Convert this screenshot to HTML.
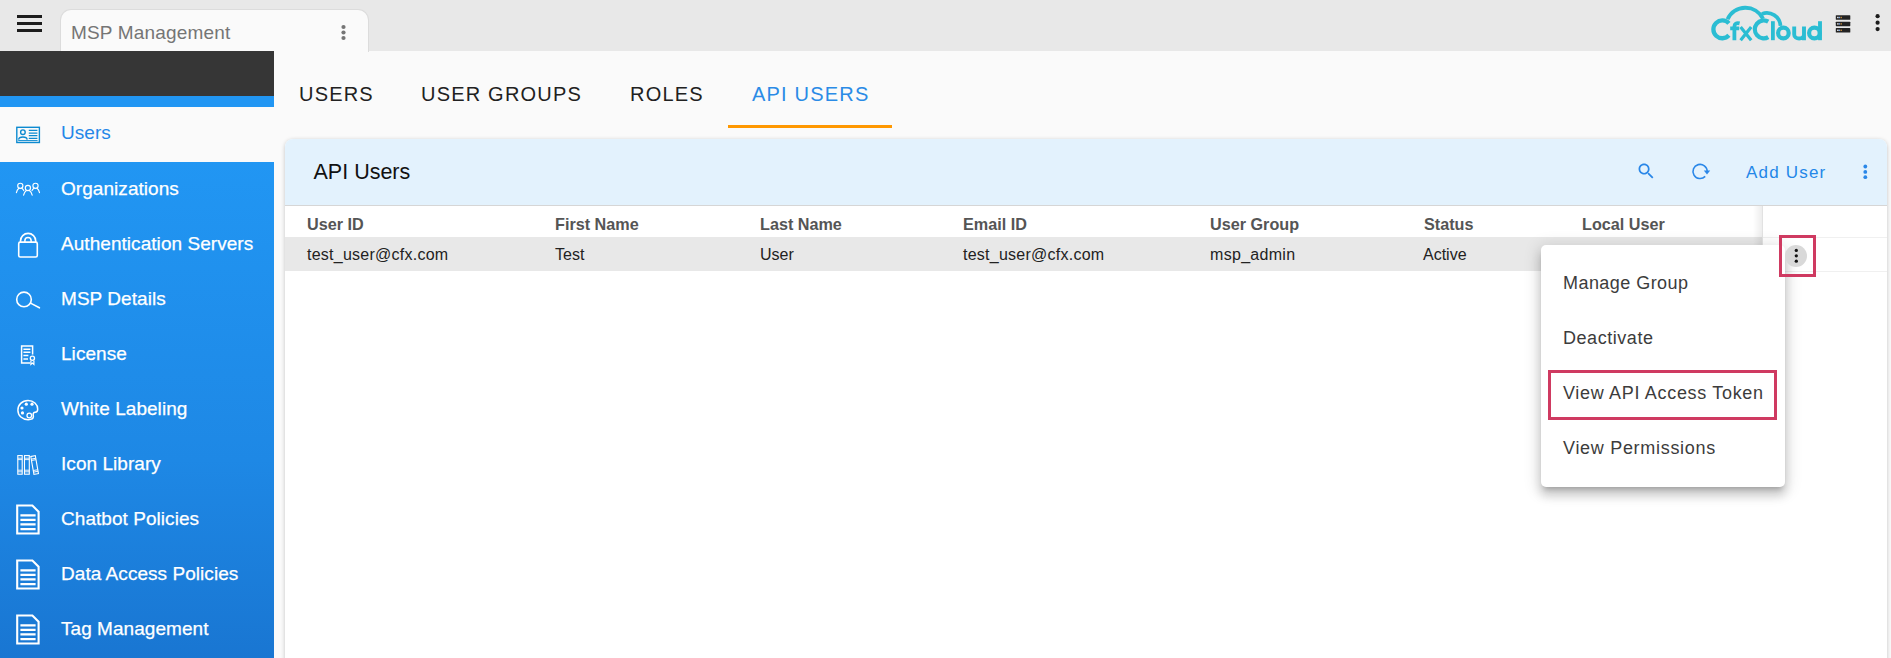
<!DOCTYPE html>
<html>
<head>
<meta charset="utf-8">
<title>MSP Management</title>
<style>
*{box-sizing:border-box;margin:0;padding:0}
html,body{width:1891px;height:658px;overflow:hidden;background:#fafafa;font-family:"Liberation Sans",sans-serif;}
.abs{position:absolute}
#topbar{left:0;top:0;width:1891px;height:51px;background:#e8e8e8}
#tab{left:60px;top:9px;width:309px;height:43px;background:#fafafa;border:1px solid #dcdcdc;border-bottom:none;border-radius:11px 11px 0 0}
#tabtxt{left:71px;top:22px;font-size:19px;line-height:22px;color:#757575;white-space:nowrap;letter-spacing:0.18px}
.ham{left:17px;width:25px;height:3px;background:#1c1c1c}
#side-dark{left:0;top:51px;width:274px;height:45px;background:#363636}
#side-blue1{left:0;top:96px;width:274px;height:11px;background:#2196f3}
#side-users{left:0;top:107px;width:274px;height:55px;background:#fafafa}
#side-blue2{left:0;top:162px;width:274px;height:496px;background:linear-gradient(180deg,#2196f3 0%,#1e88e5 60%,#1976d2 100%)}
.sitem{left:61px;font-size:19px;line-height:22px;color:#fff;white-space:nowrap;-webkit-text-stroke:0.25px #fff;letter-spacing:0.05px}
.tabs{top:82px;font-size:20px;line-height:24px;letter-spacing:1.2px;color:#212121;white-space:nowrap}
#underline{left:728px;top:125px;width:164px;height:3px;background:#ff9800}
#panel{left:285px;top:139px;width:1602px;height:540px;background:#fff;border-radius:8px 8px 0 0;box-shadow:0 1px 4px rgba(0,0,0,0.22)}
#phead{left:285px;top:139px;width:1602px;height:67px;background:#e3f2fd;border-radius:8px 8px 0 0;border-bottom:1px solid #d6d6d6}
#ptitle{left:313.5px;top:159px;font-size:21.5px;line-height:26px;color:#111;white-space:nowrap}
.th{top:215px;font-size:16.2px;line-height:18px;font-weight:bold;color:#555;white-space:nowrap}
.td{top:246px;font-size:16px;line-height:18px;color:#222;white-space:nowrap}
#row{left:285px;top:237px;width:1477px;height:34px;background:#e8e8e8}
#pin{left:1762px;top:206px;width:125px;height:66px;background:#fff;border-left:1px solid #e2e2e2}
#pinrow{left:1763px;top:237px;width:124px;height:35px;border-top:1px solid #f0f0f0;border-bottom:1px solid #f0f0f0;background:#fff}
#menu{left:1541px;top:245px;width:244px;height:242px;background:#fff;border-radius:5px;box-shadow:0 5px 5px -3px rgba(0,0,0,.2),0 8px 10px 1px rgba(0,0,0,.14),0 3px 16px 3px rgba(0,0,0,.12)}
.mi{left:1563px;font-size:18px;line-height:22px;color:#3c3c3c;white-space:nowrap;letter-spacing:0.2px}
.red{border:3px solid #cf3a61}
#adduser{left:1746px;top:163px;font-size:17px;line-height:20px;color:#2487e8;letter-spacing:1.2px;white-space:nowrap}
</style>
</head>
<body>
<div id="topbar" class="abs"></div>
<div id="tab" class="abs"></div>
<div id="tabtxt" class="abs">MSP Management</div>
<div class="abs ham" style="top:15px"></div>
<div class="abs ham" style="top:22px"></div>
<div class="abs ham" style="top:29px"></div>
<svg class="abs" style="left:339px;top:23px" width="8" height="20" viewBox="0 0 8 20"><circle cx="4.5" cy="4" r="2.1" fill="#757575"/><circle cx="4.5" cy="9.5" r="2.1" fill="#757575"/><circle cx="4.5" cy="15" r="2.1" fill="#757575"/></svg>

<div id="side-dark" class="abs"></div>
<div id="side-blue1" class="abs"></div>
<div id="side-users" class="abs"></div>
<div id="side-blue2" class="abs"></div>
<div class="abs sitem" style="top:122px;color:#2487e8;-webkit-text-stroke:0">Users</div>
<div class="abs sitem" style="top:178px">Organizations</div>
<div class="abs sitem" style="top:233px">Authentication Servers</div>
<div class="abs sitem" style="top:288px">MSP Details</div>
<div class="abs sitem" style="top:343px">License</div>
<div class="abs sitem" style="top:398px">White Labeling</div>
<div class="abs sitem" style="top:453px">Icon Library</div>
<div class="abs sitem" style="top:508px">Chatbot Policies</div>
<div class="abs sitem" style="top:563px">Data Access Policies</div>
<div class="abs sitem" style="top:618px">Tag Management</div>


<!-- sidebar icons -->
<svg class="abs" style="left:14px;top:124px" width="30" height="22" viewBox="14 124 30 22" fill="none" stroke="#0d8ad0" stroke-width="1.4">
<rect x="16.8" y="127.3" width="22.6" height="15.2"/>
<circle cx="22.9" cy="132.2" r="2.3"/>
<path d="M18.6 139.6 C19.2 136.2 26.6 136.2 27.2 139.6"/>
<path d="M28.8 130.3H37.4M28.8 133H37.4M28.8 135.7H37.4M28.8 138.3H37.4" stroke-width="1.25"/>
<path d="M18.2 140.6H37.6" stroke-width="1"/>
</svg>

<svg class="abs" style="left:14px;top:180px" width="30" height="18" viewBox="14 180 30 18" fill="none" stroke="#fff" stroke-width="1.15" stroke-linecap="round">
<circle cx="20.3" cy="185.8" r="2.6"/><path d="M16.4 192.6C17 189.6 18.4 188.6 18.9 188.2M21.8 188.2C22.6 188.8 23.4 189.6 23.8 190.6"/>
<circle cx="35.5" cy="185.8" r="2.6"/><path d="M39.5 192.6C38.9 189.6 37.5 188.6 37 188.2M34 188.2C33.2 188.8 32.4 189.6 32 190.6"/>
<circle cx="27.9" cy="188" r="2.6"/><path d="M23.6 195.2C24.2 192.2 25.7 191 26.4 190.5M29.4 190.5C30.1 191 31.6 192.2 32.2 195.2"/>
</svg>

<svg class="abs" style="left:14px;top:230px" width="30" height="30" viewBox="14 230 30 30" fill="none" stroke="#fff" stroke-width="1.6">
<rect x="18.7" y="242.1" width="18.6" height="14.9" rx="1.6"/>
<path d="M20.5 242V241A7.6 7.6 0 0 1 35.7 241V242"/>
<path d="M24.9 242V240.6A3.1 3.1 0 0 1 31.1 240.6V242" stroke-width="1.5"/>
</svg>

<svg class="abs" style="left:14px;top:288px" width="30" height="24" viewBox="14 288 30 24" fill="none" stroke="#fff" stroke-width="1.6" stroke-linecap="round">
<circle cx="24" cy="299.4" r="7.3"/>
<path d="M31 303.4L39.4 307.8"/>
</svg>

<svg class="abs" style="left:14px;top:342px" width="30" height="26" viewBox="14 342 30 26" fill="none" stroke="#fff" stroke-width="1.3">
<path d="M30 363H21.6V345.9H32.6V354.6" stroke-width="1.5"/>
<path d="M23.4 349.2H30.4M23.4 352.3H30.4M23.4 355.6H28.4M23.4 359H28" stroke-width="1.5"/>
<circle cx="32.4" cy="358.3" r="2.1"/>
<path d="M30.9 360.4V364.4L32.4 363L33.9 364.4V360.4" stroke-width="1.2"/>
</svg>

<svg class="abs" style="left:14px;top:396px" width="30" height="28" viewBox="14 396 30 28" fill="none" stroke="#fff" stroke-width="1.5">
<path d="M28 400.6C22 400.6 17.9 404.8 17.9 410.2C17.9 415.8 22.3 419.7 28.2 419.7C30.8 419.7 33.4 418.6 33.4 416.6C33.4 414.8 32.6 414.2 33.6 412.9C34.8 411.8 37.7 413.2 37.7 409.2C37.7 404.2 33.6 400.6 28 400.6Z"/>
<circle cx="29.3" cy="415.5" r="2.3" stroke-width="1.3"/>
<g fill="#fff" stroke="none"><circle cx="22" cy="408" r="1.6"/><circle cx="26.3" cy="404.2" r="1.6"/><circle cx="32" cy="404.2" r="1.6"/><circle cx="22.5" cy="412.9" r="1.6"/></g>
</svg>

<svg class="abs" style="left:14px;top:452px" width="30" height="26" viewBox="14 452 30 26" fill="none" stroke="#fff" stroke-width="1.1">
<rect x="17.8" y="455.6" width="4.4" height="18.6"/><path d="M17.8 458.2H22.2M17.8 459.6H22.2M17.8 470.2H22.2M17.8 471.8H22.2" stroke-width="0.9"/>
<rect x="24.5" y="455.6" width="4.8" height="18.6"/><path d="M24.5 458.2H29.3M24.5 459.6H29.3M24.5 470.2H29.3M24.5 471.8H29.3" stroke-width="0.9"/>
<g transform="rotate(-10 34.6 465)"><rect x="32.3" y="456" width="4.6" height="18.2"/><path d="M32.3 458.6H36.9M32.3 460H36.9M32.3 470.2H36.9M32.3 471.8H36.9" stroke-width="0.9"/></g>
</svg>
<svg class="abs" style="left:14px;top:502px" width="30" height="34" viewBox="14 0 30 34" fill="none" stroke="#fff" stroke-width="2">
<path d="M17.2 3.5H32.4L38.6 9.8V31.5H17.2Z" stroke-linejoin="miter" stroke-width="2.1"/>
<path d="M20.4 13.3H35.6M20.4 17.8H35.6M20.4 22.3H35.6M20.4 27.1H35.6" stroke-width="2.2"/>
</svg>
<svg class="abs" style="left:14px;top:557px" width="30" height="34" viewBox="14 0 30 34" fill="none" stroke="#fff" stroke-width="2">
<path d="M17.2 3.5H32.4L38.6 9.8V31.5H17.2Z" stroke-linejoin="miter" stroke-width="2.1"/>
<path d="M20.4 13.3H35.6M20.4 17.8H35.6M20.4 22.3H35.6M20.4 27.1H35.6" stroke-width="2.2"/>
</svg>
<svg class="abs" style="left:14px;top:612px" width="30" height="34" viewBox="14 0 30 34" fill="none" stroke="#fff" stroke-width="2">
<path d="M17.2 3.5H32.4L38.6 9.8V31.5H17.2Z" stroke-linejoin="miter" stroke-width="2.1"/>
<path d="M20.4 13.3H35.6M20.4 17.8H35.6M20.4 22.3H35.6M20.4 27.1H35.6" stroke-width="2.2"/>
</svg>

<div class="abs tabs" style="left:299px">USERS</div>
<div class="abs tabs" style="left:421px">USER GROUPS</div>
<div class="abs tabs" style="left:630px">ROLES</div>
<div class="abs tabs" style="left:752px;color:#2a8be6">API USERS</div>
<div id="underline" class="abs"></div>

<div id="panel" class="abs"></div>
<div id="phead" class="abs"></div>
<div id="ptitle" class="abs">API Users</div>
<div id="adduser" class="abs">Add User</div>


<!-- logo -->
<svg class="abs" style="left:1705px;top:0" width="125" height="50" viewBox="1705 0 125 50" fill="none" stroke="#2bbdd3" stroke-width="4.3">
<path d="M1728.9 23.4A8.9 8.9 0 1 0 1728.9 35.3"/>
<path d="M1768.25 21.65A8.9 8.9 0 1 0 1768.25 37.05"/>
<path d="M1739.6 23.4C1736.6 22.6 1734.4 23.6 1734.4 26.6V40.2M1730.2 28.4H1739.2" stroke-width="3.8"/>
<path d="M1740.6 26.9L1751.2 40.3M1751.2 26.9L1740.6 40.3" stroke-width="3.2"/>
<path d="M1772.9 21.2V40.2" stroke-width="3.8"/>
<circle cx="1783.4" cy="33" r="5.3" stroke-width="4.2"/>
<path d="M1794.2 26.6V34.4C1794.2 39.8 1804 39.8 1804 34.4V26.6M1804 33V40.2" stroke-width="3.9"/>
<circle cx="1814.4" cy="33" r="5.3" stroke-width="4.2"/>
<path d="M1820 21.2V40.2" stroke-width="3.9"/>
<path d="M1727.6 19.3A19.6 19.6 0 0 1 1763 18.6" stroke-width="3.9"/>
<path d="M1761.9 13.9A13.7 13.7 0 0 1 1780.5 25.9" stroke-width="3.7"/>
</svg>
<!-- server icon -->
<svg class="abs" style="left:1834px;top:13px" width="18" height="22" viewBox="1834 13 18 22">
<g fill="#232323"><rect x="1835.8" y="15.2" width="14.5" height="4.6" rx="0.6"/><rect x="1835.8" y="21.7" width="14.5" height="4.5" rx="0.6"/><rect x="1835.8" y="28.1" width="14.5" height="4.5" rx="0.6"/></g>
<g><rect x="1837.2" y="16.8" width="1.4" height="1.4" fill="#fff"/><rect x="1838.9" y="16.8" width="1.2" height="1.4" fill="#7aa7e8"/><rect x="1840.6" y="16.8" width="1.2" height="1.4" fill="#e09a3c"/>
<rect x="1837.2" y="23.2" width="1.4" height="1.4" fill="#fff"/><rect x="1838.9" y="23.2" width="1.2" height="1.4" fill="#7aa7e8"/><rect x="1840.6" y="23.2" width="1.2" height="1.4" fill="#e09a3c"/>
<rect x="1837.2" y="29.6" width="1.4" height="1.4" fill="#fff"/><rect x="1838.9" y="29.6" width="1.2" height="1.4" fill="#7aa7e8"/><rect x="1840.6" y="29.6" width="1.2" height="1.4" fill="#e09a3c"/></g>
</svg>
<svg class="abs" style="left:1873px;top:12px" width="10" height="22" viewBox="1873 12 10 22" fill="#1c1c1c"><circle cx="1877.6" cy="16.2" r="2.1"/><circle cx="1877.6" cy="22.7" r="2.1"/><circle cx="1877.6" cy="29.1" r="2.1"/></svg>

<!-- panel header icons -->
<svg class="abs" style="left:1636px;top:160.6px" width="20.4" height="20.4" viewBox="0 0 24 24" fill="#2a87e8"><path d="M15.5 14h-.79l-.28-.27C15.41 12.59 16 11.11 16 9.5 16 5.91 13.09 3 9.500 3S3 5.910 3 9.500 5.910 16 9.500 16c1.610 0 3.090-.59 4.230-1.570l.27.28v.79l5 4.990L20.490 19l-4.990-5zm-6 0C7.010 14 5 11.990 5 9.500S7.010 5 9.500 5 14 7.010 14 9.500 11.990 14 9.500 14z"/></svg>
<svg class="abs" style="left:1687.4px;top:160px" width="26" height="22" viewBox="1688 160 26 22" fill="none" stroke="#2a87e8" stroke-width="1.6">
<path d="M1706.2 176.4A7.1 7.1 0 1 1 1708.2 171.4"/>
<path d="M1704.8 170.6H1711.2L1708 174.4Z" fill="#2a87e8" stroke="none"/>
</svg>
<svg class="abs" style="left:1861px;top:162px" width="9" height="20" viewBox="1861 162 9 20" fill="#2a87e8"><circle cx="1865.3" cy="166.5" r="1.9"/><circle cx="1865.3" cy="171.9" r="1.9"/><circle cx="1865.3" cy="177.2" r="1.9"/></svg>

<div id="row" class="abs"></div>
<div class="abs th" style="left:307px">User ID</div>
<div class="abs th" style="left:555px">First Name</div>
<div class="abs th" style="left:760px">Last Name</div>
<div class="abs th" style="left:963px">Email ID</div>
<div class="abs th" style="left:1210px">User Group</div>
<div class="abs th" style="left:1424px">Status</div>
<div class="abs th" style="left:1582px">Local User</div>
<div class="abs td" style="left:307px;letter-spacing:0.25px">test_user@cfx.com</div>
<div class="abs td" style="left:555px">Test</div>
<div class="abs td" style="left:760px">User</div>
<div class="abs td" style="left:963px;letter-spacing:0.25px">test_user@cfx.com</div>
<div class="abs td" style="left:1210px;letter-spacing:0.3px">msp_admin</div>
<div class="abs td" style="left:1423px">Active</div>

<div class="abs" style="left:1753px;top:206px;width:9px;height:65px;background:linear-gradient(90deg,rgba(0,0,0,0),rgba(0,0,0,.07))"></div>
<div id="pin" class="abs"></div>
<div id="pinrow" class="abs"></div>

<div id="menu" class="abs"></div>
<div class="abs mi" style="top:272px;letter-spacing:0.45px">Manage Group</div>
<div class="abs mi" style="top:327px;letter-spacing:0.55px">Deactivate</div>
<div class="abs mi" style="top:382px;letter-spacing:0.68px">View API Access Token</div>
<div class="abs mi" style="top:437px;letter-spacing:0.7px">View Permissions</div>
<div class="abs red" style="left:1548px;top:370px;width:229px;height:50px"></div>
<div class="abs" style="left:1785.2px;top:245px;width:22px;height:22px;border-radius:50%;background:#d9d9d9"></div>
<svg class="abs" style="left:1793px;top:247px" width="7" height="18" viewBox="1793 247 7 18" fill="#141414"><circle cx="1796.3" cy="250.4" r="1.65"/><circle cx="1796.3" cy="255.8" r="1.65"/><circle cx="1796.3" cy="261.2" r="1.65"/></svg>
<div class="abs red" style="left:1779px;top:235px;width:37px;height:42px"></div>
</body>
</html>
